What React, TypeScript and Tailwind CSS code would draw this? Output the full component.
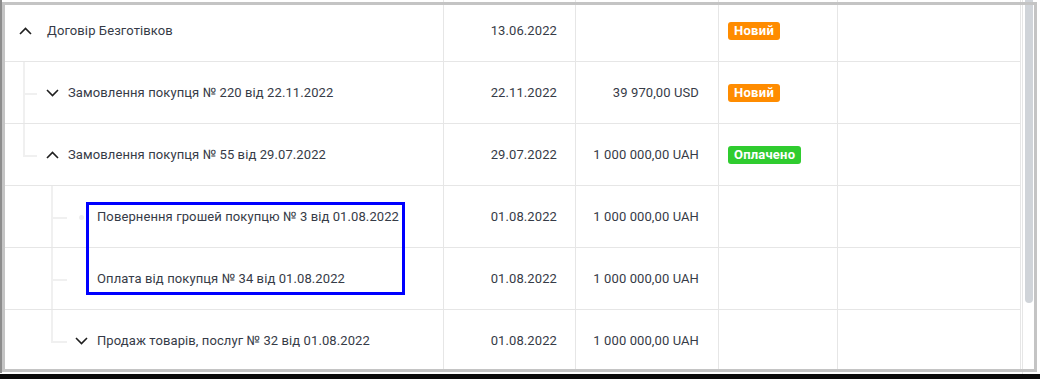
import React from 'react';

type Row = {
  level: number;
  kind: 'up' | 'down' | 'dot' | 'leaf';
  title: string;
  date: string;
  amount?: string;
  status?: 'new' | 'paid';
  // tree guide: does the vertical line stop at the middle of the row
  last?: boolean;
};

const rows: Row[] = [
  { level: 0, kind: 'up', title: 'Договір Безготівков', date: '13.06.2022', status: 'new' },
  { level: 1, kind: 'down', title: 'Замовлення покупця № 220 від 22.11.2022', date: '22.11.2022', amount: '39 970,00 USD', status: 'new' },
  { level: 1, kind: 'up', title: 'Замовлення покупця № 55 від 29.07.2022', date: '29.07.2022', amount: '1 000 000,00 UAH', status: 'paid', last: true },
  { level: 2, kind: 'dot', title: 'Повернення грошей покупцю № 3 від 01.08.2022', date: '01.08.2022', amount: '1 000 000,00 UAH' },
  { level: 2, kind: 'leaf', title: 'Оплата від покупця № 34 від 01.08.2022', date: '01.08.2022', amount: '1 000 000,00 UAH' },
  { level: 2, kind: 'down', title: 'Продаж товарів, послуг № 32 від 01.08.2022', date: '01.08.2022', amount: '1 000 000,00 UAH', last: true },
];

function Chevron({ up }: { up: boolean }) {
  return (
    <svg width="13" height="8" viewBox="0 0 13 8" className="shrink-0">
      <polyline
        points={up ? '1,7 6.5,1.5 12,7' : '1,1 6.5,6.5 12,1'}
        fill="none"
        stroke="#1f1f1f"
        strokeWidth="1.6"
      />
    </svg>
  );
}

function Badge({ status }: { status: 'new' | 'paid' }) {
  return status === 'new' ? (
    <span className="rounded-[3px] bg-[#ff8c00] px-[6px] text-[13px] font-bold leading-[18px] tracking-[0.3px] text-white">Новий</span>
  ) : (
    <span className="rounded-[3px] bg-[#2fcc2f] px-[6px] text-[13px] font-bold leading-[18px] tracking-[0.2px] text-white">Оплачено</span>
  );
}

function TitleCell({ row }: { row: Row }) {
  const guideX = row.level === 1 ? 'left-[23px]' : 'left-[51px]';
  const stubW = row.level === 1 ? 'w-[14px]' : 'w-[16px]';
  const pad =
    row.level === 0
      ? 'pl-[19px] gap-[15px]'
      : row.level === 1
        ? 'pl-[46px] gap-[9px]'
        : row.kind === 'down'
          ? 'pl-[75px] gap-[9px]'
          : 'pl-[97px]';

  return (
    <div className={`relative flex h-full w-[444px] shrink-0 items-center border-r border-[#e6e6e6] ${pad}`}>
      {row.level > 0 && (
        <>
          <div className={`absolute top-0 w-[2px] bg-[#f0f0f0] ${guideX} ${row.last ? 'h-1/2' : 'h-full'}`} />
          <div className={`absolute top-1/2 h-[2px] bg-[#f0f0f0] ${guideX} ${stubW}`} />
        </>
      )}
      {row.kind === 'dot' && <div className="absolute left-[79px] top-[29px] h-[5px] w-[5px] rounded-full bg-[#eeeeee]" />}
      {(row.kind === 'up' || row.kind === 'down') && <Chevron up={row.kind === 'up'} />}
      <span>{row.title}</span>
    </div>
  );
}

export default function App() {
  return (
    <div className="flex h-[379px] w-[1040px] flex-col overflow-hidden bg-white font-['Roboto',sans-serif] text-[13px] tracking-[0.1px] text-[#363b47]">
      <div className="relative h-[374px] w-full">
        <div className="flex h-full">
          <div className="w-[1023px] border-r border-[#e6e6e6]">
            <div className="w-[1021px] border-r border-[#e6e6e6]">
              {rows.map((row, i) => (
                <div key={i} className="flex h-[62px] border-b border-[#e6e6e6]">
                  <TitleCell row={row} />
                  <div className="flex h-full w-[132px] shrink-0 items-center justify-end border-r border-[#e6e6e6] pr-[18px]">
                    {row.date}
                  </div>
                  <div className="flex h-full w-[143px] shrink-0 items-center justify-end border-r border-[#e6e6e6] pr-[19px]">
                    {row.amount}
                  </div>
                  <div className="flex h-full w-[119px] shrink-0 items-center border-r border-[#e6e6e6] pl-[9px]">
                    {row.status && <Badge status={row.status} />}
                  </div>
                  <div className="h-full flex-1" />
                </div>
              ))}
            </div>
          </div>
          {/* scrollbar */}
          <div className="w-[17px] pl-[2px]">
            <div className="h-[303px] w-[8px] rounded-b-[4px] bg-[#d0d4d9]" />
          </div>
        </div>

        {/* selection highlight */}
        <div className="absolute left-[86px] top-[202px] h-[93px] w-[319px] border-[3px] border-[#0000ff]" />

        {/* screenshot frame */}
        <div className="absolute left-0 top-0 h-[373px] w-[2px] bg-[#8c8c8c]" />
        <div className="absolute left-[2px] top-[2px] h-[370px] w-[1035px] border-[3px] border-[#c4c4c4]" />
      </div>
      <div className="h-[5px] w-full bg-[#0a0a0a]" />
    </div>
  );
}
